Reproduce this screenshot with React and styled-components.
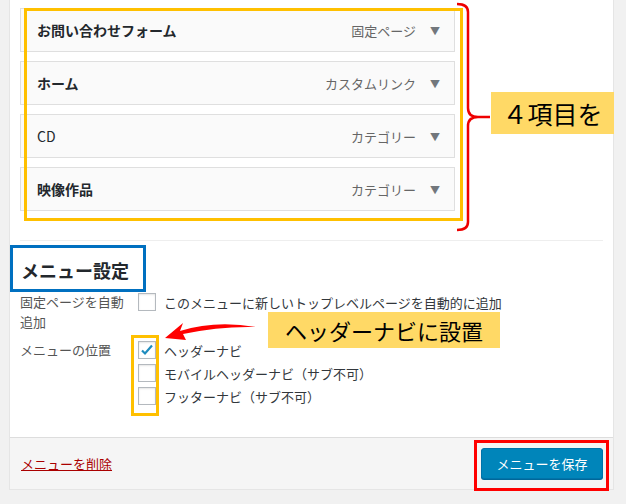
import React from 'react';
import styled, { createGlobalStyle } from 'styled-components';

const Global = createGlobalStyle`
  html, body { margin: 0; background: #f1f1f1; }
  body { font-family: "Noto Sans CJK JP", "Liberation Sans", sans-serif; color: #23282d; }
`;

const Page = styled.div`
  position: relative;
  width: 626px;
  height: 504px;
  overflow: hidden;
`;

const Panel = styled.div`
  margin: 0 12px 0 9px;
  background: #fff;
  border: 1px solid #e5e5e5;
  border-top: none;
`;

const Body = styled.div`
  padding: 8px 10px 0 10px;
  height: 437px;
  box-sizing: border-box;
`;

const Items = styled.div`
  display: flex;
  flex-direction: column;
  gap: 9px;
  width: 435px;
`;

const Item = styled.div`
  display: flex;
  align-items: center;
  height: 42px;
  padding: 0 14px 0 16px;
  background: #fafafa;
  border: 1px solid #dfdfdf;
  font-size: 14px;
  font-weight: ${p => (p.$bold ? 700 : 400)};
`;

const Title = styled.span`
  flex: 1;
`;

const Type = styled.span`
  color: #666;
  font-size: 13px;
  font-weight: 400;
  margin-right: 14px;
`;

const Caret = styled.span`
  color: #72777c;
  font-size: 10px;
`;

const Sep = styled.div`
  height: 1px;
  background: #eee;
  margin: 29px 0 0;
`;

const Heading = styled.h3`
  margin: 16px 0 9px 1px;
  font-size: 18px;
  font-weight: 700;
`;

const Row = styled.div`
  display: grid;
  grid-template-columns: 118px 1fr;
  font-size: 13px;
  color: #555;
  margin-top: ${p => p.$mt || 0}px;
`;

const Label = styled.div`
  line-height: 20px;
`;

const Opts = styled.div`
  display: flex;
  flex-direction: column;
  gap: 3px;
`;

const Opt = styled.label`
  display: flex;
  align-items: center;
  gap: 8px;
  height: 20px;
  color: #32373c;
`;

const Box = styled.span`
  width: 16px;
  height: 16px;
  border: 1px solid #b4b9be;
  background: #fff;
  box-shadow: inset 0 1px 2px rgba(0,0,0,0.1);
  display: flex;
  align-items: center;
  justify-content: center;
`;

const Footer = styled.div`
  display: flex;
  align-items: center;
  justify-content: space-between;
  height: 51px;
  padding: 0 10px 0 11px;
  background: #f5f5f5;
  border-top: 1px solid #ddd;
`;

const Delete = styled.a`
  color: #a00;
  font-size: 13px;
  text-decoration: underline;
`;

const Save = styled.button`
  background: #0085ba;
  border: 1px solid #0073aa;
  border-radius: 3px;
  color: #fff;
  font-family: inherit;
  font-size: 13px;
  width: 122px;
  height: 31px;
  box-shadow: 0 1px 0 #006799;
`;

const Frame = styled.div`
  position: absolute;
  box-sizing: border-box;
  border: 3px solid ${p => p.$c};
`;

const Note = styled.div`
  position: absolute;
  background: #ffd966;
  font-family: "Liberation Serif", "Noto Sans CJK JP", serif;
  color: #000;
  display: flex;
  align-items: center;
  justify-content: center;
`;

const Overlay = styled.svg`
  position: absolute;
  left: 0;
  top: 0;
  pointer-events: none;
`;

const Check = () => (
  <svg width="14" height="14" viewBox="0 0 14 14">
    <path d="M2 7.5l3 3 7-8" fill="none" stroke="#1e8cbe" strokeWidth="2.2" />
  </svg>
);

export default function App() {
  return (
    <Page>
      <Global />
      <Panel>
        <Body>
          <Items>
            <Item $bold><Title>お問い合わせフォーム</Title><Type>固定ページ</Type><Caret>▼</Caret></Item>
            <Item $bold><Title>ホーム</Title><Type>カスタムリンク</Type><Caret>▼</Caret></Item>
            <Item><Title>CD</Title><Type>カテゴリー</Type><Caret>▼</Caret></Item>
            <Item $bold><Title>映像作品</Title><Type>カテゴリー</Type><Caret>▼</Caret></Item>
          </Items>
          <Sep />
          <Heading>メニュー設定</Heading>
          <Row>
            <Label>固定ページを自動<br />追加</Label>
            <Opts>
              <Opt><Box /> このメニューに新しいトップレベルページを自動的に追加</Opt>
            </Opts>
          </Row>
          <Row $mt={8}>
            <Label>メニューの位置</Label>
            <Opts>
              <Opt><Box><Check /></Box>ヘッダーナビ</Opt>
              <Opt><Box />モバイルヘッダーナビ（サブ不可）</Opt>
              <Opt><Box />フッターナビ（サブ不可）</Opt>
            </Opts>
          </Row>
        </Body>
        <Footer>
          <Delete>メニューを削除</Delete>
          <Save>メニューを保存</Save>
        </Footer>
      </Panel>

      <Frame $c="#ffc000" style={{ left: 24, top: 8, width: 439, height: 213 }} />
      <Frame $c="#0070c0" style={{ left: 10, top: 245, width: 136, height: 47 }} />
      <Frame $c="#ffc000" style={{ left: 131, top: 335, width: 28, height: 81 }} />
      <Frame $c="#ff0000" style={{ left: 474, top: 440, width: 135, height: 51 }} />
      <Note style={{ left: 491, top: 92, width: 123, height: 42, fontSize: 25 }}>４項目を</Note>
      <Note style={{ left: 268, top: 312, width: 232, height: 36, fontSize: 22 }}>ヘッダーナビに設置</Note>
      <Overlay width="626" height="504">
        <path d="M457 4 Q468 4 468 12 L468 108 Q468 117 478 117 L490 117 M478 117 Q468 117 468 126 L468 222 Q468 230 457 230" fill="none" stroke="#e00" strokeWidth="2.5" />
        <path d="M256 327 Q215 320 180 331 L183 323 L165 338 L186 340 L183 334 Q220 326 256 327 Z" fill="#f00" />
      </Overlay>
    </Page>
  );
}
